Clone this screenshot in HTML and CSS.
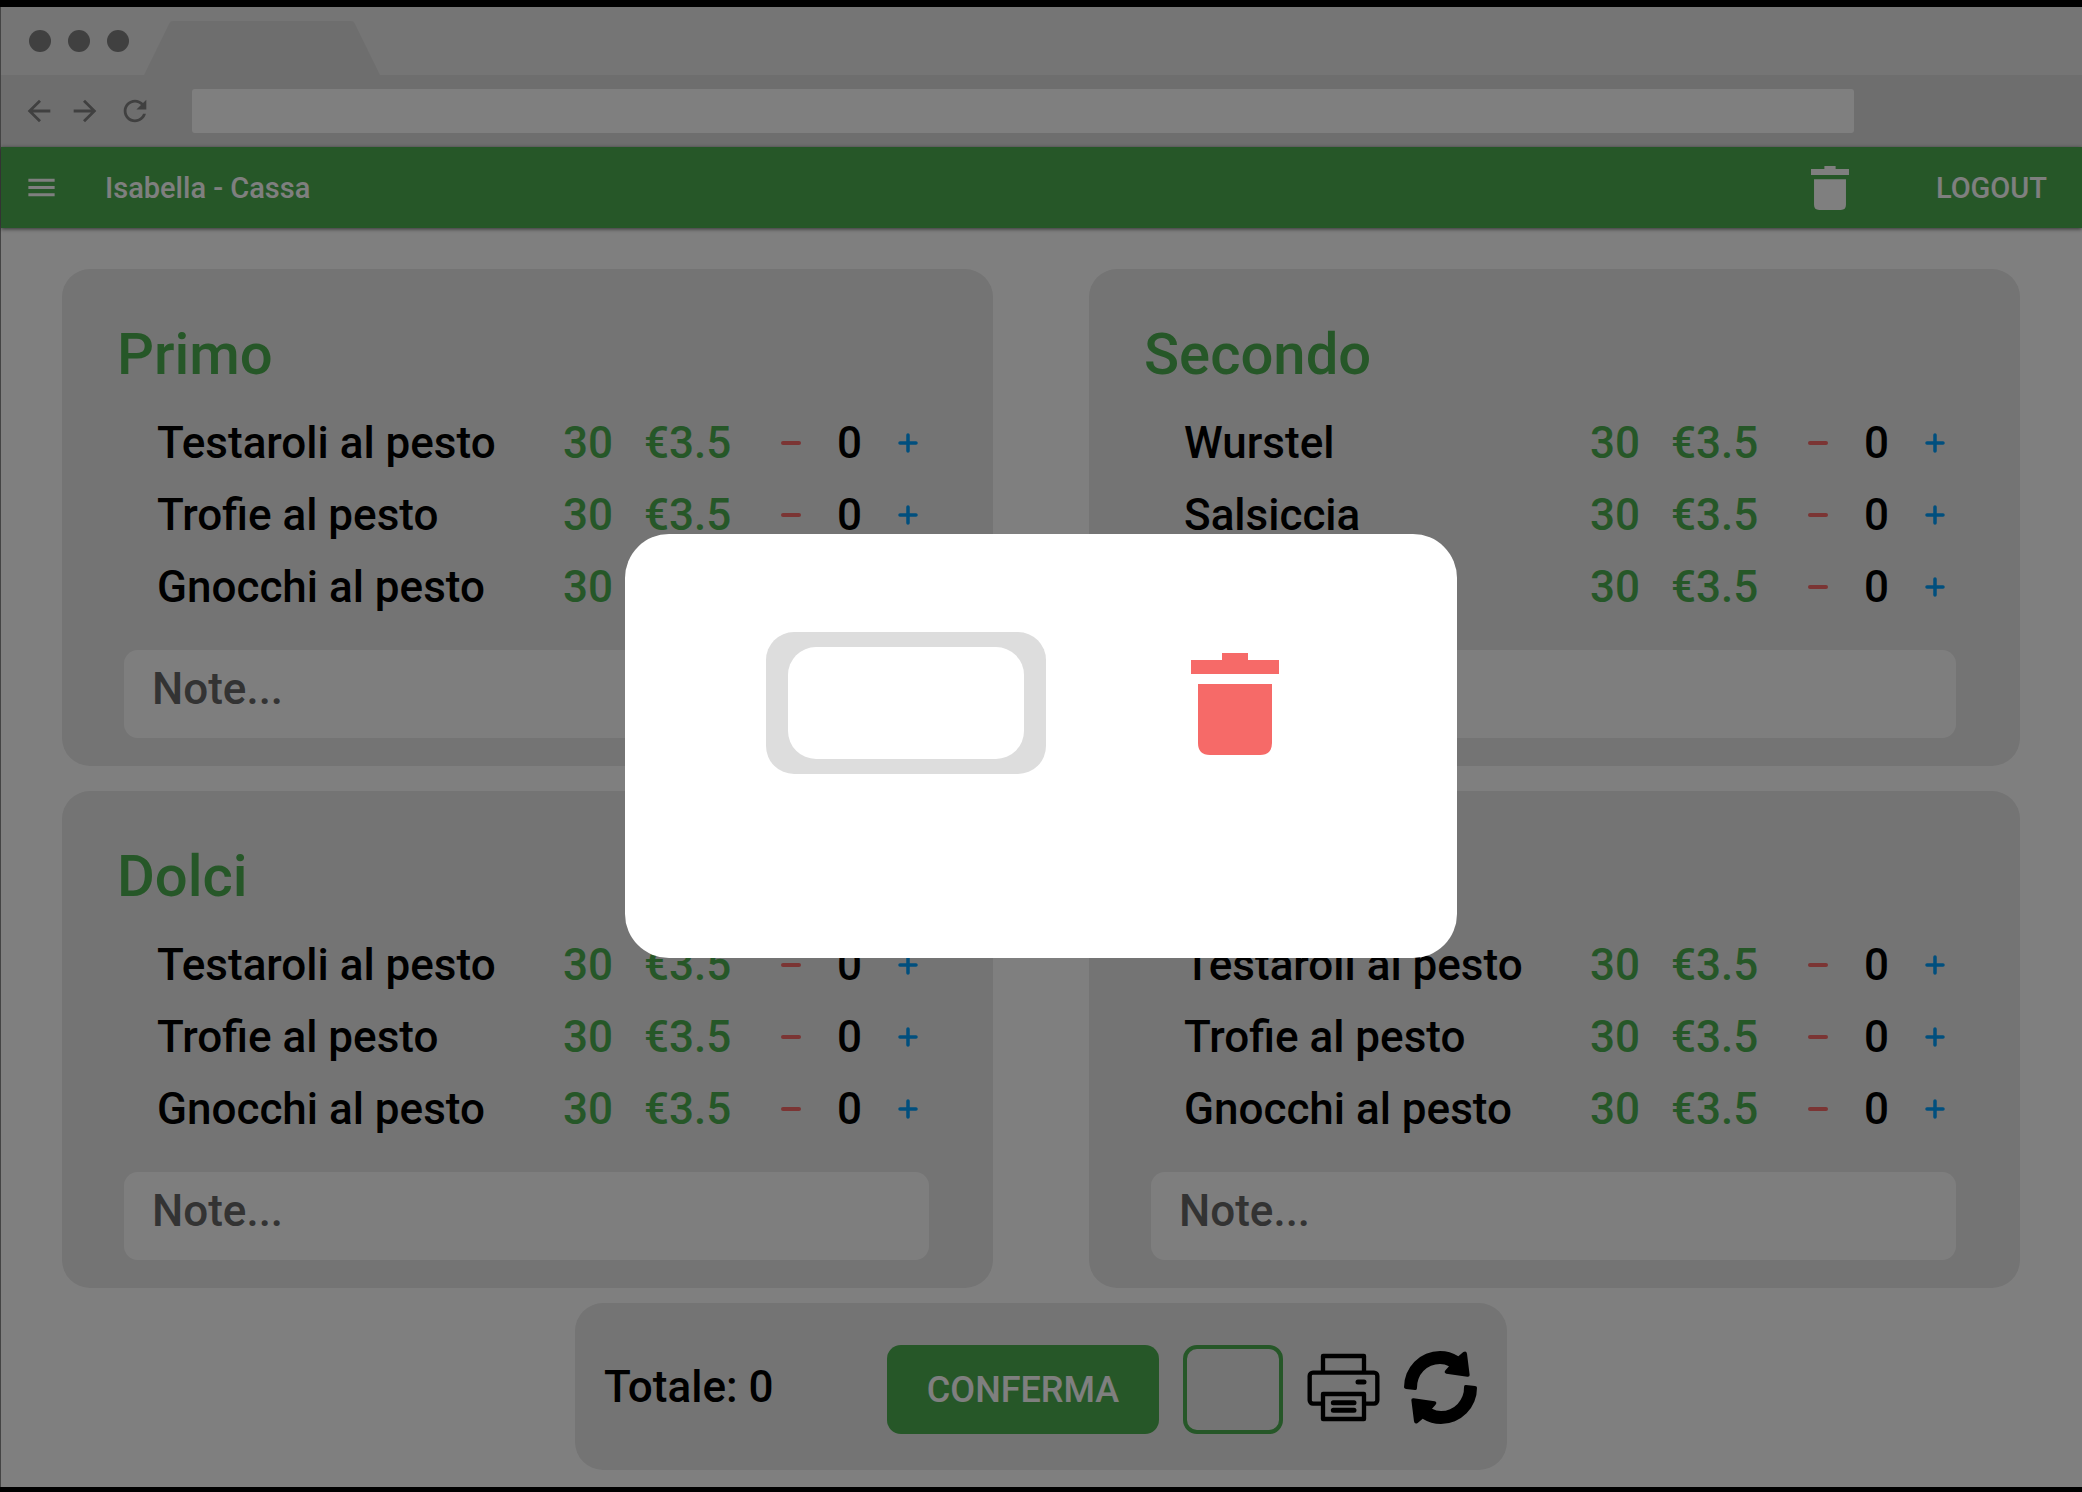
FILE: index.html
```html
<!DOCTYPE html>
<html lang="it">
<head>
<meta charset="utf-8">
<meta name="viewport" content="width=device-width, initial-scale=1">
<title>Isabella - Cassa</title>
<link rel="stylesheet" href="styles.css">
</head>
<body>
<svg class="sprite" aria-hidden="true">
  <symbol id="minus" viewBox="0 0 22 22"><path d="M3 11H19" stroke="currentColor" stroke-width="4" stroke-linecap="round"/></symbol>
  <symbol id="plus" viewBox="0 0 22 22"><path d="M3 11H19M11 3V19" stroke="currentColor" stroke-width="3.5" stroke-linecap="round"/></symbol>
  <symbol id="trash" viewBox="0 0 88 102"><path fill="currentColor" d="M0 7H31V0H57V7H88V21H0ZM7 31H81V90Q81 102 69 102H19Q7 102 7 90Z"/></symbol>
</svg>

<div class="window">
  <div class="tabs">
    <span class="dot"></span><span class="dot"></span><span class="dot"></span>
    <svg class="tab" viewBox="0 0 236 54" aria-hidden="true"><path d="M0 54L25 3Q26 0 29 0H207Q210 0 211 3L236 54Z" fill="currentColor"/></svg>
  </div>
  <div class="toolbar">
    <button class="nav" aria-label="Indietro"><svg viewBox="0 0 24 24"><path fill="currentColor" d="M20 11H7.830l5.590-5.590L12 4l-8 8 8 8 1.410-1.410L7.830 13H20v-2z"/></svg></button>
    <button class="nav" aria-label="Avanti"><svg viewBox="0 0 24 24"><path fill="currentColor" d="M12 4l-1.410 1.410L16.170 11H4v2h12.170l-5.580 5.590L12 20l8-8z"/></svg></button>
    <button class="nav reload" aria-label="Ricarica"><svg viewBox="0 0 24 24"><path fill="currentColor" d="M17.650 6.350C16.200 4.900 14.210 4 12 4c-4.420 0-7.990 3.580-7.990 8s3.570 8 7.990 8c3.730 0 6.840-2.550 7.730-6h-2.080c-.820 2.330-3.040 4-5.650 4-3.310 0-6-2.690-6-6s2.690-6 6-6c1.660 0 3.140.690 4.220 1.780L13 11h7V4l-2.350 2.350z"/></svg></button>
    <input class="url" type="text" aria-label="Indirizzo">
  </div>

  <header class="appbar">
    <button class="menu" aria-label="Menu"><svg viewBox="0 0 24 24"><path fill="currentColor" d="M3 18h18v-2H3v2zm0-5h18v-2H3v2zm0-7v2h18V6H3z"/></svg></button>
    <h1 class="brand">Isabella - Cassa</h1>
    <button class="bin" aria-label="Svuota"><svg><use href="#trash"/></svg></button>
    <a class="logout" href="#">LOGOUT</a>
  </header>

  <main class="page">
    <div class="cards">
      <section class="card">
        <h2>Primo</h2>
        <ul class="items">
          <li><span>Testaroli al pesto</span><span class="green">30</span><span class="green">€3.5</span><button class="less" aria-label="Meno"><svg><use href="#minus"/></svg></button><output>0</output><button class="more" aria-label="Più"><svg><use href="#plus"/></svg></button></li>
          <li><span>Trofie al pesto</span><span class="green">30</span><span class="green">€3.5</span><button class="less" aria-label="Meno"><svg><use href="#minus"/></svg></button><output>0</output><button class="more" aria-label="Più"><svg><use href="#plus"/></svg></button></li>
          <li><span>Gnocchi al pesto</span><span class="green">30</span><span class="green">€3.5</span><button class="less" aria-label="Meno"><svg><use href="#minus"/></svg></button><output>0</output><button class="more" aria-label="Più"><svg><use href="#plus"/></svg></button></li>
        </ul>
        <input class="note" type="text" placeholder="Note..." aria-label="Note primo">
      </section>
      <section class="card">
        <h2>Secondo</h2>
        <ul class="items">
          <li><span>Wurstel</span><span class="green">30</span><span class="green">€3.5</span><button class="less" aria-label="Meno"><svg><use href="#minus"/></svg></button><output>0</output><button class="more" aria-label="Più"><svg><use href="#plus"/></svg></button></li>
          <li><span>Salsiccia</span><span class="green">30</span><span class="green">€3.5</span><button class="less" aria-label="Meno"><svg><use href="#minus"/></svg></button><output>0</output><button class="more" aria-label="Più"><svg><use href="#plus"/></svg></button></li>
          <li><span></span><span class="green">30</span><span class="green">€3.5</span><button class="less" aria-label="Meno"><svg><use href="#minus"/></svg></button><output>0</output><button class="more" aria-label="Più"><svg><use href="#plus"/></svg></button></li>
        </ul>
        <input class="note" type="text" placeholder="Note..." aria-label="Note secondo">
      </section>
      <section class="card">
        <h2>Dolci</h2>
        <ul class="items">
          <li><span>Testaroli al pesto</span><span class="green">30</span><span class="green">€3.5</span><button class="less" aria-label="Meno"><svg><use href="#minus"/></svg></button><output>0</output><button class="more" aria-label="Più"><svg><use href="#plus"/></svg></button></li>
          <li><span>Trofie al pesto</span><span class="green">30</span><span class="green">€3.5</span><button class="less" aria-label="Meno"><svg><use href="#minus"/></svg></button><output>0</output><button class="more" aria-label="Più"><svg><use href="#plus"/></svg></button></li>
          <li><span>Gnocchi al pesto</span><span class="green">30</span><span class="green">€3.5</span><button class="less" aria-label="Meno"><svg><use href="#minus"/></svg></button><output>0</output><button class="more" aria-label="Più"><svg><use href="#plus"/></svg></button></li>
        </ul>
        <input class="note" type="text" placeholder="Note..." aria-label="Note dolci">
      </section>
      <section class="card">
        <h2></h2>
        <ul class="items">
          <li><span>Testaroli al pesto</span><span class="green">30</span><span class="green">€3.5</span><button class="less" aria-label="Meno"><svg><use href="#minus"/></svg></button><output>0</output><button class="more" aria-label="Più"><svg><use href="#plus"/></svg></button></li>
          <li><span>Trofie al pesto</span><span class="green">30</span><span class="green">€3.5</span><button class="less" aria-label="Meno"><svg><use href="#minus"/></svg></button><output>0</output><button class="more" aria-label="Più"><svg><use href="#plus"/></svg></button></li>
          <li><span>Gnocchi al pesto</span><span class="green">30</span><span class="green">€3.5</span><button class="less" aria-label="Meno"><svg><use href="#minus"/></svg></button><output>0</output><button class="more" aria-label="Più"><svg><use href="#plus"/></svg></button></li>
        </ul>
        <input class="note" type="text" placeholder="Note..." aria-label="Note">
      </section>
    </div>

    <footer class="summary">
      <span class="total">Totale: 0</span>
      <button class="confirm">CONFERMA</button>
      <input class="amount" type="text" aria-label="Importo">
      <button class="tool" aria-label="Stampa"><svg viewBox="0 0 219 219"><g transform="translate(0 8)" fill="none" stroke="currentColor" stroke-width="13" stroke-linejoin="round"><path d="M48 56V7H171V56"/><path d="M42 150H18A10 10 0 0 1 8 140V67A10 10 0 0 1 18 57H201A10 10 0 0 1 211 67V140A10 10 0 0 1 201 150H177"/><path d="M48 121H171V196H48Z"/><path d="M153 85H171M79 147H141M79 170H141" stroke-width="15" stroke-linecap="round"/></g></svg></button>
      <button class="tool" aria-label="Aggiorna"><svg viewBox="0 0 219 219"><g fill="currentColor"><path id="arc" d="M0 109A108 108 0 0 1 108 0Q138 0 163 16L178 3Q187 -2 189 8L197 72Q197 78 190 77L127 68Q118 65 125 57L135 46Q122 39 108 39A69 69 0 0 0 39 111Q39 118 33 117L6 114Q0 113 0 109Z"/><use href="#arc" transform="rotate(180 109.500 109.500)"/></g></svg></button>
    </footer>
  </main>
</div>

<div class="overlay">
  <div class="dialog" role="dialog" aria-modal="true" aria-label="Svuota">
    <div class="field"><input type="text" aria-label="Valore"></div>
    <button class="remove" aria-label="Elimina"><svg><use href="#trash"/></svg></button>
  </div>
</div>
</body>
</html>
```

FILE: styles.css
```css
* { box-sizing: border-box; }

body {
  margin: 0;
  min-height: 100vh;
  padding: 7px 0 5px;
  display: flex;
  flex-direction: column;
  background: #000;
  color: #000;
  font-family: Roboto, "Liberation Sans", sans-serif;
  font-weight: 500;
}

button, input {
  margin: 0;
  padding: 0;
  border: 0;
  background: none;
  color: inherit;
  font: inherit;
}
button { display: flex; align-items: center; justify-content: center; cursor: pointer; }
svg { display: block; }
.sprite { position: absolute; width: 0; height: 0; }

.window {
  flex: 1;
  display: flex;
  flex-direction: column;
  background: #fff;
  border-left: 1px solid #888;
}

/* Browser frame */
.tabs {
  height: 68px;
  padding-left: 28px;
  display: flex;
  align-items: center;
  gap: 17px;
  background: #eaeaea;
}
.dot { width: 22px; height: 22px; border-radius: 50%; background: #808080; }
.tab { width: 236px; height: 54px; align-self: flex-end; margin-left: -2px; color: #ddd; }

.toolbar {
  height: 72px;
  padding: 0 228px 0 21px;
  display: flex;
  align-items: center;
  gap: 12px;
  background: #ddd;
  color: #808080;
}
.nav svg { width: 34px; height: 34px; }
.reload { margin: 0 28px 0 4px; }
.url { flex: 1; min-width: 0; height: 44px; border-radius: 3px; background: #fff; }

/* Application bar */
.appbar {
  height: 81px;
  padding: 0 35px 0 23px;
  display: flex;
  align-items: center;
  background: #4caf50;
  color: #fff;
  font-size: 29px;
  box-shadow: 0 1px 4px rgba(0, 0, 0, .6);
}
.menu svg { width: 35px; height: 35px; }
.brand { flex: 1; margin: 0 0 0 46px; font-size: inherit; font-weight: 500; }
.bin svg { width: 38px; height: 44px; }
.logout { margin-left: 87px; color: inherit; text-decoration: none; }

/* Menu sections */
.page {
  flex: 1;
  padding: 41px 62px 17px 61px;
  display: flex;
  flex-direction: column;
  align-items: center;
  gap: 15px;
}
.cards {
  width: 100%;
  display: grid;
  grid-template-columns: 1fr 1fr;
  gap: 25px 96px;
}
.card {
  padding: 51px 0 28px;
  display: flex;
  flex-direction: column;
  border-radius: 28px;
  background: #e8e8e8;
}
.card h2 {
  min-height: 68px;
  margin: 0 0 19px;
  padding-left: 55px;
  color: #4caf50;
  font-size: 58px;
  line-height: 68px;
  font-weight: 500;
}
.items {
  margin: 0 0 27px;
  padding: 0 55px 0 95px;
  list-style: none;
  font-size: 44px;
}
.items li {
  height: 72px;
  display: grid;
  grid-template-columns: 1fr 81px 117px 60px 57px 60px;
  align-items: center;
}
.items svg { width: 22px; height: 22px; }
.items output { text-align: center; }
.green { color: #4caf50; }
.less { color: #f66a68; }
.more { color: #009efc; }
.note {
  height: 88px;
  margin: 0 64px 0 62px;
  padding: 0 28px 10px;
  border-radius: 14px;
  background: #fdfdfd;
  font-size: 44px;
}
.note::placeholder { color: #666; opacity: 1; }

/* Order summary */
.summary {
  width: 932px;
  max-width: 100%;
  padding: 42px 30px 36px 29px;
  display: flex;
  align-items: center;
  gap: 24px;
  border-radius: 28px;
  background: #e8e8e8;
  font-size: 44px;
}
.total { flex: 1; padding-bottom: 5px; }
.confirm {
  width: 272px;
  height: 89px;
  border-radius: 14px;
  background: #4caf50;
  color: #fff;
  font-size: 36px;
}
.amount { width: 100px; height: 89px; border: 4px solid #4caf50; border-radius: 14px; }
.tool { padding-bottom: 5px; }
.tool svg { width: 73px; height: 73px; overflow: visible; }

/* Dialog */
.overlay {
  position: fixed;
  inset: 0;
  display: flex;
  align-items: center;
  justify-content: center;
  background: rgba(0, 0, 0, .5);
}
.dialog {
  width: 832px;
  min-height: 424px;
  padding: 98px 141px;
  display: flex;
  align-items: flex-start;
  gap: 145px;
  border-radius: 44px;
  background: #fff;
}
.field { padding: 15px 22px; border-radius: 28px; background: #ddd; }
.field input { display: block; width: 236px; height: 112px; border-radius: 28px; background: #fff; }
.remove { height: 144px; color: #f66a68; }
.remove svg { width: 88px; height: 102px; }
```
